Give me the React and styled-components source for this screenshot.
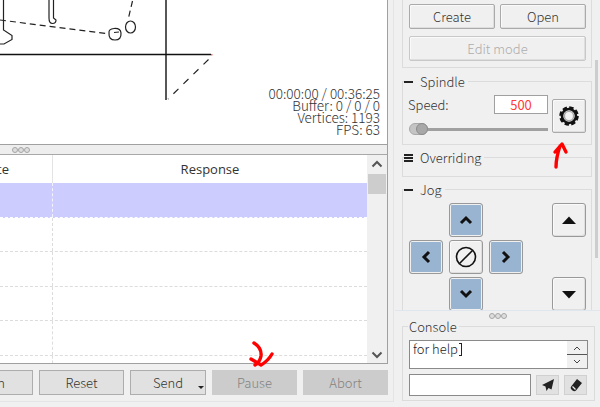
import React from "react";
import styled, { createGlobalStyle, css } from "styled-components";

const GlobalStyle = createGlobalStyle`
  html, body {
    margin: 0;
    padding: 0;
    width: 600px;
    height: 407px;
    overflow: hidden;
    background: #f0f0f0;
  }
  body {
    font-family: "Noto Sans CJK JP", "Liberation Sans", sans-serif;
    font-weight: 300;
    font-size: 13px;
    color: #333;
  }
`;

const rows = [1, 2, 3, 4, 5];

const SplitDots = () => (
  <Dots>
    <Dot />
    <Dot />
    <Dot />
  </Dots>
);

const App = () => (
  <Page>
    <GlobalStyle />
    <LeftColumn>
      <Viewer>
        <Drawing width="387" height="144" viewBox="0 0 387 144">
          <g fill="none" stroke="#222" strokeWidth="1.2">
            <path d="M3.5 0V30L12 35.5V39.5L4 44H0" />
            <path d="M49 0V18Q49 23.5 52.5 23.5Q56 23.5 56 20L53.5 18V0" />
            <path d="M109 33Q108.5 29 114 28.5Q120.5 28 121 33Q121.5 40 115 40Q108.5 40 109 33Z" />
            <ellipse cx="130.5" cy="27" rx="5" ry="6" />
            <path d="M0 20L106 33.5M114 32.5L119 32M132.5 1L128 20" strokeDasharray="6 4" />
            <path d="M208.5 59.5L168 99" strokeDasharray="7 7" />
          </g>
          <path d="M0 54.5H211M166 0V100" fill="none" stroke="#111" strokeWidth="1.4" />
          <rect x="211" y="54" width="1.5" height="1.5" fill="#f66" />
        </Drawing>
        <Stats>
          <div>00:00:00 / 00:36:25</div>
          <div>Buffer: 0 / 0 / 0</div>
          <div>Vertices: 1193</div>
          <div>FPS: 63</div>
        </Stats>
      </Viewer>
      <HSplitter>
        <SplitDots />
      </HSplitter>
      <TableBox>
        <TableMain>
          <HeaderRow>
            <FirstCell>State</FirstCell>
            <ResponseCell>Response</ResponseCell>
          </HeaderRow>
          {rows.map((r) => (
            <Row key={r} $selected={r === 1} />
          ))}
          <LastRow />
        </TableMain>
        <Scrollbar>
          <ScrollEnd>
            <svg width="14" height="10" viewBox="0 0 14 10"><path d="M2.5 7.5L7 3L11.5 7.5" fill="none" stroke="#555" strokeWidth="2" /></svg>
          </ScrollEnd>
          <ScrollThumb />
          <ScrollEnd $bottom>
            <svg width="14" height="10" viewBox="0 0 14 10"><path d="M2.5 2.5L7 7L11.5 2.5" fill="none" stroke="#555" strokeWidth="2" /></svg>
          </ScrollEnd>
        </Scrollbar>
      </TableBox>
      <ActionRow>
        <ActionButton>Scan</ActionButton>
        <ActionButton>Reset</ActionButton>
        <ActionButton $width={76}>
          Send
          <MenuCaret />
        </ActionButton>
        <ActionButton $disabled>Pause</ActionButton>
        <ActionButton $disabled>Abort</ActionButton>
      </ActionRow>
    </LeftColumn>

    <RightColumn>
      <ScrollPanel>
        <ClippedGroup>
          <TwoButtons>
            <RaisedButton>Create</RaisedButton>
            <RaisedButton>Open</RaisedButton>
          </TwoButtons>
          <RaisedButton $disabled>Edit mode</RaisedButton>
        </ClippedGroup>

        <Group $height={64}>
          <Legend><Minus />Spindle</Legend>
          <SpindleBody>
            <SpindleControls>
              <SpeedRow>
                <span>Speed:</span>
                <SpeedInput>500</SpeedInput>
              </SpeedRow>
              <Slider>
                <SliderKnob />
              </Slider>
            </SpindleControls>
            <RaisedButton $square>
              <svg width="22" height="22" viewBox="0 0 22 22">
                <circle cx="11" cy="11" r="8.6" fill="none" stroke="#111" strokeWidth="2.4" strokeDasharray="4.4 2.35" />
                <circle cx="11" cy="11" r="7" fill="none" stroke="#111" strokeWidth="2.6" />
                <circle cx="11" cy="11" r="4.6" fill="#f4f4f4" stroke="#a8a8a8" strokeWidth="1.4" />
              </svg>
            </RaisedButton>
          </SpindleBody>
        </Group>

        <Group $height={20}>
          <Legend>
            <Burger />
            Overriding
          </Legend>
        </Group>

        <Group $height={130}>
          <Legend><Minus />Jog</Legend>
          <JogBody>
            <JogPad>
              <JogSlot $col={2} $row={1}>
                <JogButton $blue>
                  <svg width="16" height="12" viewBox="0 0 16 12"><path d="M3 9L8 4L13 9" fill="none" stroke="#111" strokeWidth="3" /></svg>
                </JogButton>
              </JogSlot>
              <JogSlot $col={1} $row={2}>
                <JogButton $blue>
                  <svg width="12" height="16" viewBox="0 0 12 16"><path d="M9 3L4 8L9 13" fill="none" stroke="#111" strokeWidth="3" /></svg>
                </JogButton>
              </JogSlot>
              <JogSlot $col={2} $row={2}>
                <JogButton>
                  <svg width="24" height="24" viewBox="0 0 24 24"><circle cx="12" cy="12" r="9.5" fill="none" stroke="#111" strokeWidth="1.6" /><path d="M5.5 18.5L18.5 5.5" stroke="#111" strokeWidth="1.6" /></svg>
                </JogButton>
              </JogSlot>
              <JogSlot $col={3} $row={2}>
                <JogButton $blue>
                  <svg width="12" height="16" viewBox="0 0 12 16"><path d="M3 3L8 8L3 13" fill="none" stroke="#111" strokeWidth="3" /></svg>
                </JogButton>
              </JogSlot>
              <JogSlot $col={2} $row={3}>
                <JogButton $blue>
                  <svg width="16" height="12" viewBox="0 0 16 12"><path d="M3 3L8 8L13 3" fill="none" stroke="#111" strokeWidth="3" /></svg>
                </JogButton>
              </JogSlot>
            </JogPad>
            <ZColumn>
              <JogButton>
                <svg width="14" height="9" viewBox="0 0 14 9"><path d="M0 8L7 0.5L14 8Z" fill="#111" /></svg>
              </JogButton>
              <JogButton>
                <svg width="14" height="9" viewBox="0 0 14 9"><path d="M0 1L7 8.5L14 1Z" fill="#111" /></svg>
              </JogButton>
            </ZColumn>
          </JogBody>
        </Group>
        <PanelScroll><PanelScrollThumb /></PanelScroll>
      </ScrollPanel>

      <VSplitter>
        <SplitDots />
      </VSplitter>

      <ConsoleGroup>
        <Legend $plain>Console</Legend>
        <ConsoleText>
          <ConsoleLine>for help<Cursor /></ConsoleLine>
          <SpinBox>
            <SpinPart $top>
              <svg width="8" height="6" viewBox="0 0 8 6"><path d="M1 5L4 2L7 5" fill="none" stroke="#444" strokeWidth="1" /></svg>
            </SpinPart>
            <SpinPart>
              <svg width="8" height="6" viewBox="0 0 8 6"><path d="M1 1L4 4L7 1" fill="none" stroke="#444" strokeWidth="1" /></svg>
            </SpinPart>
          </SpinBox>
        </ConsoleText>
        <ConsoleInputRow>
          <ConsoleInput />
          <ToolButton>
            <svg width="14" height="14" viewBox="0 0 14 14"><path d="M13 1L1 7L4.5 8.5L5.5 13L7.5 10L10.5 11.5Z" fill="#222" /></svg>
          </ToolButton>
          <ToolButton>
            <svg width="14" height="14" viewBox="0 0 14 14"><path d="M8 1L13 5L7 12.5Q5.5 14 3.5 12.5L2 11Q1 9.5 2.5 8Z" fill="#222" /><path d="M3.5 8.5L6.5 11.5" stroke="#eee" strokeWidth="1.2" /></svg>
          </ToolButton>
        </ConsoleInputRow>
      </ConsoleGroup>
    </RightColumn>

    <Annotations width="600" height="407" viewBox="0 0 600 407">
      <g fill="none" stroke="#f00" strokeWidth="3.4" strokeLinecap="round" strokeLinejoin="round">
        <path d="M556 167Q556 158 560 146M555 152L562 144L566 152" />
        <path d="M254 343Q262 348 261 356Q260 362 255 365M251 359L261 365Q268 361 272 354" />
      </g>
    </Annotations>
  </Page>
);

const Page = styled.div`
  position: relative;
  display: flex;
  width: 600px;
  height: 407px;
  overflow: hidden;
  background: #f0f0f0;
`;

const LeftColumn = styled.div`
  width: 388px;
  flex: none;
  display: flex;
  flex-direction: column;
  height: 401px;
  border-bottom: 1px solid #e4e4e4;
  border-right: 1px solid #e4e4e4;
  padding-right: 5px;
`;

const Viewer = styled.div`
  position: relative;
  height: 144px;
  flex: none;
  background: #fff;
  border-right: 1px solid #a0a0a0;
  border-bottom: 1px solid #a0a0a0;
`;

const Drawing = styled.svg`
  display: block;
`;

const Stats = styled.div`
  position: absolute;
  right: 7px;
  bottom: 9px;
  text-align: right;
  font-size: 13.5px;
  line-height: 12px;
  color: #333;
`;

const HSplitter = styled.div`
  height: 9px;
  flex: none;
  display: flex;
  align-items: center;
  padding-left: 12px;
  background: #eeeeee;
  border-bottom: 1px solid #a8a8a8;
  border-right: 1px solid #a0a0a0;
`;

const Dots = styled.span`
  display: flex;
`;

const Dot = styled.span`
  display: block;
  width: 6px;
  height: 6px;
  box-sizing: border-box;
  border-radius: 50%;
  background: #dedede;
  border: 1px solid #a6a6a6;
`;

const TableBox = styled.div`
  display: flex;
  height: 208px;
  flex: none;
  background: #fff;
  border-right: 1px solid #a0a0a0;
  border-bottom: 1px solid #a0a0a0;
`;

const TableMain = styled.div`
  flex: 1;
  min-width: 0;
  overflow: hidden;
  display: flex;
  flex-direction: column;
`;

const HeaderRow = styled.div`
  height: 28px;
  flex: none;
  display: grid;
  grid-template-columns: 53px 1fr;
  font-family: "Open Sans", sans-serif;
  font-weight: 400;
  font-size: 13px;
  color: #333;
`;

const FirstCell = styled.div`
  display: flex;
  justify-content: flex-end;
  align-items: center;
  padding-right: 43px;
  border-right: 1px solid #e4e4e4;
`;

const ResponseCell = styled.div`
  display: flex;
  justify-content: center;
  align-items: center;
`;

const Row = styled.div`
  height: 34.6px;
  flex: none;
  box-sizing: border-box;
  display: grid;
  grid-template-columns: 53px 1fr;
  border-bottom: 1px dashed #dcdcdc;
  background: ${({ $selected }) => ($selected ? "#ccccff" : "#fff")};
  &::before {
    content: "";
    border-right: 1px dashed #dcdcdc;
    border-right-color: ${({ $selected }) => ($selected ? "#f4f4ff" : "#dcdcdc")};
  }
  ${({ $selected }) => $selected && css`border-bottom-color: #fff;`}
`;

const LastRow = styled(Row)`
  flex: 1;
  border-bottom: 0;
`;

const Scrollbar = styled.div`
  width: 20px;
  flex: none;
  display: flex;
  flex-direction: column;
  background: #f0f0f0;
`;

const ScrollEnd = styled.div`
  height: 17px;
  flex: none;
  display: flex;
  align-items: center;
  justify-content: center;
  margin-top: ${({ $bottom }) => ($bottom ? "auto" : "0")};
`;

const ScrollThumb = styled.div`
  height: 20px;
  margin: 2px 1px 0 1px;
  background: #cdcdcd;
`;

const ActionRow = styled.div`
  display: flex;
  justify-content: flex-end;
  gap: 6px;
  padding: 6px 0;
`;

const ActionButton = styled.div`
  position: relative;
  width: ${({ $width }) => $width || 85}px;
  height: 25px;
  flex: none;
  box-sizing: border-box;
  display: flex;
  align-items: center;
  justify-content: center;
  background: ${({ $disabled }) => ($disabled ? "#cccccc" : "#e1e1e1")};
  border: 1px solid ${({ $disabled }) => ($disabled ? "#cccccc" : "#adadad")};
  color: ${({ $disabled }) => ($disabled ? "#838383" : "#333")};
`;

const MenuCaret = styled.span`
  position: absolute;
  right: 1px;
  bottom: 5px;
  border-left: 3px solid transparent;
  border-right: 3px solid transparent;
  border-top: 3px solid #222;
`;

const RightColumn = styled.div`
  flex: 1;
  min-width: 0;
  display: flex;
  flex-direction: column;
  padding-left: 1px;
`;

const ScrollPanel = styled.div`
  position: relative;
  height: 311px;
  flex: none;
  overflow: hidden;
  display: flex;
  flex-direction: column;
  box-sizing: border-box;
  padding-left: 7px;
  padding-right: 8px;
  border-bottom: 1px solid #dfe6ee;
`;

const ClippedGroup = styled.div`
  flex: none;
  height: 68px;
  box-sizing: border-box;
  margin-bottom: 13px;
  padding: 4px 5px 0 6px;
  border: 1px solid #dcdcdc;
  border-top: 0;
  display: flex;
  flex-direction: column;
  gap: 7px;
`;

const TwoButtons = styled.div`
  display: grid;
  grid-template-columns: 86px 86px;
  justify-content: space-between;
`;

const RaisedButton = styled.div`
  height: 25px;
  box-sizing: border-box;
  display: flex;
  align-items: center;
  justify-content: center;
  border: 1px solid #aaa;
  border-radius: 2px;
  background: #f0f0f0;
  box-shadow: inset -1px -1px 0 #dedede, inset 1px 1px 0 #fafafa;
  color: ${({ $disabled }) => ($disabled ? "#adadad" : "#333")};
  ${({ $disabled }) => $disabled && css`border-color: #c8c8c8;`}
  ${({ $square }) => $square && css`
    width: 34px;
    height: 34px;
    flex: none;
    margin-top: 4px;
  `}
`;

const Group = styled.div`
  position: relative;
  flex: none;
  box-sizing: border-box;
  height: ${({ $height }) => $height}px;
  margin-bottom: 12px;
  border: 1px solid #dcdcdc;
`;

const Legend = styled.div`
  position: absolute;
  top: -8px;
  left: 1px;
  height: 15px;
  display: flex;
  align-items: center;
  gap: 7px;
  padding-right: 3px;
  background: #f0f0f0;
  font-size: 13px;
  color: #333;
  ${({ $plain }) => $plain && css`left: 5px; padding: 0 2px 0 1px;`}
`;

const Minus = styled.span`
  display: block;
  width: 9px;
  height: 2px;
  background: #222;
`;

const Burger = styled.span`
  display: block;
  width: 9px;
  height: 2px;
  background: #222;
  box-shadow: 0 -3px 0 #222, 0 3px 0 #222;
`;

const SpindleBody = styled.div`
  display: flex;
  gap: 4px;
  padding: 13px 5px 0 5px;
`;

const SpindleControls = styled.div`
  flex: 1;
  min-width: 0;
  display: flex;
  flex-direction: column;
`;

const SpeedRow = styled.div`
  display: flex;
  justify-content: space-between;
  align-items: center;
  height: 19px;
`;

const SpeedInput = styled.div`
  width: 54px;
  height: 19px;
  box-sizing: border-box;
  display: flex;
  align-items: center;
  justify-content: center;
  background: #fff;
  border: 1px solid #a0a0a0;
  font-weight: 400;
  color: #ff3b3b;
`;

const Slider = styled.div`
  position: relative;
  height: 3px;
  margin: 14px 0 0 2px;
  background: #a0a0a0;
`;

const SliderKnob = styled.span`
  position: absolute;
  top: -5px;
  left: -1px;
  width: 19px;
  height: 12px;
  border-radius: 6px;
  background: #c4c4c4;
  border: 1px solid #a8a8a8;
  box-sizing: border-box;
  &::after {
    content: "";
    position: absolute;
    top: -1px;
    right: -1px;
    width: 12px;
    height: 12px;
    box-sizing: border-box;
    border-radius: 50%;
    background: #a8a8a8;
    border: 1px solid #8c8c8c;
  }
`;

const JogBody = styled.div`
  display: flex;
  justify-content: space-between;
  padding: 13px 5px 0 6px;
`;

const JogPad = styled.div`
  display: grid;
  grid-template-columns: repeat(3, 34px);
  grid-auto-rows: 34px;
  gap: 3px 6px;
`;

const JogSlot = styled.div`
  grid-column: ${({ $col }) => $col};
  grid-row: ${({ $row }) => $row};
`;

const JogButton = styled.div`
  width: 34px;
  height: 34px;
  box-sizing: border-box;
  display: flex;
  align-items: center;
  justify-content: center;
  border: 1px solid #999;
  border-radius: 3px;
  background: ${({ $blue }) => ($blue ? "#99b4d1" : "#f0f0f0")};
  box-shadow: ${({ $blue }) => ($blue ? "inset 0 0 0 1px #f0f0f0" : "inset -1px -1px 0 #dedede, inset 1px 1px 0 #fafafa")};
`;

const ZColumn = styled.div`
  display: flex;
  flex-direction: column;
  gap: 40px;
`;

const PanelScroll = styled.div`
  position: absolute;
  top: 0;
  bottom: 0;
  right: 2px;
  width: 3px;
`;

const PanelScrollThumb = styled.div`
  margin-top: 60px;
  height: 198px;
  background: #cdcdcd;
`;

const VSplitter = styled.div`
  height: 9px;
  flex: none;
  display: flex;
  justify-content: center;
  align-items: center;
`;

const ConsoleGroup = styled.div`
  position: relative;
  flex: none;
  box-sizing: border-box;
  height: 75px;
  margin: 6px 5px 0 7px;
  padding: 13px 6px 0 6px;
  border: 1px solid #dcdcdc;
  display: flex;
  flex-direction: column;
  gap: 5px;
`;

const ConsoleText = styled.div`
  height: 29px;
  flex: none;
  box-sizing: border-box;
  display: flex;
  background: #fff;
  border: 1px solid #8a8a8a;
`;

const ConsoleLine = styled.div`
  flex: 1;
  padding-left: 3px;
  line-height: 15px;
  color: #222;
`;

const Cursor = styled.span`
  display: inline-block;
  width: 3px;
  height: 13px;
  margin-left: 1px;
  vertical-align: -2px;
  border: 1px solid #222;
  border-left: 0;
  box-sizing: border-box;
`;

const SpinBox = styled.div`
  width: 20px;
  flex: none;
  display: flex;
  flex-direction: column;
  background: #f0f0f0;
`;

const SpinPart = styled.div`
  flex: 1;
  display: flex;
  align-items: center;
  justify-content: center;
  ${({ $top }) => $top && css`border-bottom: 1px solid #555;`}
`;

const ConsoleInputRow = styled.div`
  display: flex;
  align-items: center;
  gap: 5px;
`;

const ConsoleInput = styled.div`
  width: 122px;
  height: 22px;
  box-sizing: border-box;
  flex: none;
  background: #fff;
  border: 1px solid #8a8a8a;
`;

const ToolButton = styled.div`
  width: 23px;
  height: 20px;
  box-sizing: border-box;
  flex: none;
  display: flex;
  align-items: center;
  justify-content: center;
  background: #e1e1e1;
  border: 1px solid #d0d0d0;
`;

const Annotations = styled.svg`
  position: absolute;
  inset: 0;
  pointer-events: none;
`;

export default App;
